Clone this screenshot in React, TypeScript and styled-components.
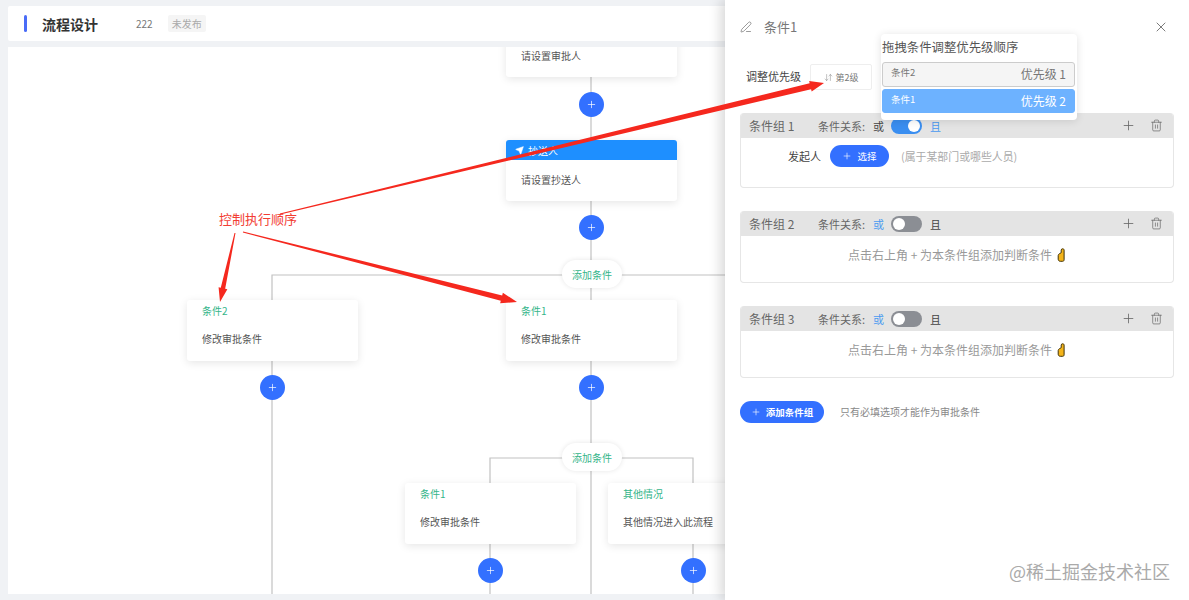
import { FC } from 'react';
import styled, { createGlobalStyle } from 'styled-components';
import { ArrowDownUp, PenLine, Plus, Send, Trash2, X } from 'lucide-react';

const GlobalStyle = createGlobalStyle`
    html, body {
        margin: 0;
        padding: 0;
        background: #f0f2f5;
        font-family: "Noto Sans CJK SC", "Liberation Sans", sans-serif;
    }
`;

const Page = styled.div`
    position: relative;
    width: 1189px;
    height: 600px;
    overflow: hidden;
    display: flex;
    flex-direction: column;
    gap: 6px;
    padding: 6px 0 6px 8px;
    box-sizing: border-box;
`;

const TopBar = styled.header`
    height: 35px;
    flex: none;
    background: #fff;
    border-radius: 2px;
    display: flex;
    align-items: center;
    padding-left: 16px;
`;

const AccentBar = styled.i`
    width: 3px;
    height: 17px;
    border-radius: 2px;
    background: #4a6cf7;
    margin-right: 15px;
`;

const PageTitle = styled.h1`
    margin: 0 38px 0 0;
    font-size: 14px;
    font-weight: 700;
    color: #333;
`;

const FlowId = styled.span`
    font-size: 10px;
    color: #777;
    margin-right: 15px;
`;

const StatusTag = styled.span`
    height: 17px;
    line-height: 17px;
    padding: 0 4px;
    font-size: 10px;
    color: #aaa;
    background: #f5f5f5;
    border-radius: 2px;
`;

const Canvas = styled.main`
    position: relative;
    flex: 1;
    background: #fff;
    overflow: hidden;
`;

const Wires = styled.svg`
    position: absolute;
    inset: 0;
`;

const Card = styled.div<{ $x: number; $y: number }>`
    position: absolute;
    left: ${p => p.$x}px;
    top: ${p => p.$y}px;
    width: 171px;
    height: 61px;
    display: flex;
    flex-direction: column;
    background: #fff;
    border-radius: 3px;
    box-shadow: 0 2px 8px rgba(0, 0, 0, 0.1);
`;

const CardBanner = styled.div`
    height: 20px;
    flex: none;
    display: flex;
    align-items: center;
    gap: 4px;
    padding-left: 9px;
    background: #1e8fff;
    color: #fff;
    font-size: 10px;
    border-radius: 3px 3px 0 0;
`;

const CardTitle = styled.div`
    height: 22px;
    flex: none;
    line-height: 22px;
    padding-left: 15px;
    font-size: 10px;
    color: #35b58a;
`;

const CardBody = styled.div<{ $lift?: boolean }>`
    flex: 1;
    display: flex;
    align-items: center;
    padding: 0 0 ${p => (p.$lift ? 6 : 2)}px 15px;
    font-size: 10px;
    color: #555;
`;

const AddNode = styled.button<{ $x: number; $y: number }>`
    position: absolute;
    left: ${p => p.$x - 12.5}px;
    top: ${p => p.$y - 12.5}px;
    width: 25px;
    height: 25px;
    padding: 0;
    border: none;
    border-radius: 50%;
    background: #3370ff;
    color: #fff;
    display: flex;
    align-items: center;
    justify-content: center;
`;

const AddBranch = styled.button<{ $y: number }>`
    position: absolute;
    left: 554px;
    top: ${p => p.$y}px;
    width: 60px;
    height: 28px;
    padding: 0;
    border: none;
    border-radius: 14px;
    background: #fff;
    color: #35b58a;
    font: inherit;
    font-size: 10px;
    box-shadow: 0 0 5px rgba(0, 0, 0, 0.1);
`;

const Drawer = styled.aside`
    position: absolute;
    top: 0;
    right: 0;
    bottom: 0;
    width: 464px;
    box-sizing: border-box;
    padding: 0 15px;
    display: flex;
    flex-direction: column;
    background: #fff;
    box-shadow: -4px 0 12px rgba(0, 0, 0, 0.16);
`;

const DrawerHead = styled.div`
    height: 54px;
    flex: none;
    display: flex;
    align-items: center;
    color: #666;
`;

const DrawerTitle = styled.span`
    flex: 1;
    margin: -2px 0 0 12px;
    font-size: 13px;
    color: #777;
`;

const CloseButton = styled.span`
    display: flex;
    margin-right: 5px;
    color: #666;
`;

const PriorityRow = styled.div`
    height: 26px;
    flex: none;
    margin: 10px 0 23px;
    padding-left: 6px;
    display: flex;
    align-items: center;
`;

const PriorityLabel = styled.span`
    width: 64px;
    margin-top: -2px;
    font-size: 11px;
    color: #444;
`;

const PriorityButton = styled.div`
    width: 62px;
    height: 26px;
    box-sizing: border-box;
    border: 1px solid #eee;
    border-radius: 2px;
    display: flex;
    align-items: center;
    justify-content: center;
    gap: 3px;
    font-size: 9px;
    color: #777;
`;

const Popover = styled.div`
    position: absolute;
    z-index: 2;
    top: 34px;
    left: 156px;
    width: 196px;
    height: 86px;
    box-sizing: border-box;
    padding: 0 2px 0 1px;
    display: flex;
    flex-direction: column;
    background: #fff;
    border-radius: 4px;
    box-shadow: 0 1px 8px rgba(0, 0, 0, 0.12);
`;

const PopoverTitle = styled.div`
    height: 28px;
    flex: none;
    line-height: 26px;
    font-size: 12.4px;
    color: #555;
`;

const PriorityItem = styled.div<{ $active?: boolean }>`
    height: ${p => (p.$active ? 24 : 25)}px;
    flex: none;
    margin-bottom: 2px;
    box-sizing: border-box;
    padding: 0 8px 2px;
    display: flex;
    align-items: center;
    justify-content: space-between;
    border-radius: 3px;
    border: 1px solid ${p => (p.$active ? '#6db2ff' : '#ccc')};
    background: ${p => (p.$active ? '#6db2ff' : '#f5f5f5')};
    color: ${p => (p.$active ? '#fff' : '#777')};
    font-size: 12px;
`;

const ItemName = styled.span`
    font-size: 9.5px;
    margin-top: -3px;
`;

const Groups = styled.div`
    display: flex;
    flex-direction: column;
    gap: 23px;
`;

const Group = styled.section<{ $height: number }>`
    height: ${p => p.$height}px;
    box-sizing: border-box;
    display: flex;
    flex-direction: column;
    border: 1px solid #e6e6e6;
    border-top: none;
    border-radius: 4px;
    overflow: hidden;
`;

const GroupHead = styled.div`
    height: 25px;
    flex: none;
    display: flex;
    align-items: center;
    padding: 0 10px 0 8px;
    background: #e4e4e4;
    color: #666;
`;

const GroupName = styled.span`
    width: 69px;
    font-size: 12px;
`;

const RelationLabel = styled.span`
    width: 55px;
    font-size: 11px;
`;

const RelationWord = styled.span<{ $active: boolean }>`
    font-size: 11px;
    color: ${p => (p.$active ? '#4a9af0' : '#444')};
`;

const Toggle = styled.span<{ $on: boolean }>`
    width: 31px;
    height: 16px;
    margin: 0 8px 0 7px;
    box-sizing: border-box;
    padding: 2px;
    display: flex;
    justify-content: ${p => (p.$on ? 'flex-end' : 'flex-start')};
    border-radius: 8px;
    background: ${p => (p.$on ? '#3a8ef0' : '#8b8e94')};
`;

const Knob = styled.i`
    width: 12px;
    height: 12px;
    border-radius: 50%;
    background: #fff;
`;

const GroupTools = styled.div`
    margin-left: auto;
    display: flex;
    align-items: center;
    gap: 14px;
    color: #666;
`;

const RuleRow = styled.div`
    display: flex;
    align-items: center;
    padding: 7px 0 0 47px;
`;

const RuleName = styled.span`
    width: 42px;
    font-size: 11px;
    color: #444;
`;

const PrimaryButton = styled.button<{ $width: number; $bold?: boolean }>`
    width: ${p => p.$width}px;
    height: 22px;
    flex: none;
    padding: 0 0 1px;
    border: none;
    border-radius: 11px;
    background: #3370ff;
    color: #fff;
    font: inherit;
    font-size: 9.5px;
    font-weight: ${p => (p.$bold ? 700 : 400)};
    display: flex;
    align-items: center;
    justify-content: center;
    gap: 5px;
`;

const RuleHint = styled.span`
    margin: -1px 0 0 12px;
    font-size: 10.9px;
    color: #aaa;
`;

const EmptyTip = styled.div`
    display: flex;
    align-items: center;
    justify-content: center;
    gap: 5px;
    padding: 10px 0 0 0;
    font-size: 12px;
    line-height: 18px;
    color: #999;
`;

const FooterRow = styled.div`
    margin-top: 23px;
    display: flex;
    align-items: center;
    gap: 16px;
`;

const FooterHint = styled.span`
    margin-top: -2px;
    font-size: 10px;
    color: #888;
`;

const Annotations = styled.svg`
    position: absolute;
    z-index: 3;
    inset: 0;
    pointer-events: none;
`;

const Callout = styled.span`
    position: absolute;
    z-index: 3;
    left: 219px;
    top: 210px;
    font-size: 13px;
    line-height: 18px;
    color: #f23d33;
`;

const Watermark = styled.span`
    position: absolute;
    z-index: 3;
    right: 19px;
    bottom: 16px;
    font-size: 18px;
    line-height: 26px;
    color: #aaa;
`;

// tapered annotation arrow, thin at the tail and fat by the head
const arrowPoints = (
    [x1, y1]: number[],
    [x2, y2]: number[],
    tail: number,
    neck: number,
    headLen: number,
    headWidth: number
) => {
    const len = Math.hypot(x2 - x1, y2 - y1);
    const ux = (x2 - x1) / len;
    const uy = (y2 - y1) / len;
    const nx = -uy;
    const ny = ux;
    const bx = x2 - ux * headLen;
    const by = y2 - uy * headLen;
    const pts = [
        [x1 + (nx * tail) / 2, y1 + (ny * tail) / 2],
        [bx + (nx * neck) / 2, by + (ny * neck) / 2],
        [bx + (nx * headWidth) / 2, by + (ny * headWidth) / 2],
        [x2, y2],
        [bx - (nx * headWidth) / 2, by - (ny * headWidth) / 2],
        [bx - (nx * neck) / 2, by - (ny * neck) / 2],
        [x1 - (nx * tail) / 2, y1 - (ny * tail) / 2]
    ];
    return pts.map(p => p.join(',')).join(' ');
};

const HandIcon: FC = () => (
    <svg width="9" height="14" viewBox="0 0 9 14">
        <path
            d="M5.6.8c.9 0 1.500.5 1.500 1.300v9.700c0 .9-.6 1.500-1.500 1.500H3.300c-1.200 0-2.100-.9-2.100-2.100V7.600c0-.8.4-1.400 1-1.700L4.200 4.700V2.100C4.200 1.300 4.800.8 5.600.8z"
            fill="#f4b41a"
            stroke="#3f3208"
            strokeWidth="1"
        />
    </svg>
);

const WireLines: FC = () => (
    <Wires width="1181" height="547">
        <g stroke="#c2c2c2" strokeWidth="1.2" fill="none">
            <path d="M583 30V93M583 154V547" />
            <path d="M264 547V228H720" />
            <path d="M482 547V411H685V547" />
        </g>
    </Wires>
);

const groups = [
    { name: '条件组 2', on: false },
    { name: '条件组 3', on: false }
];

const GroupHeader: FC<{ name: string; on: boolean }> = ({ name, on }) => (
    <GroupHead>
        <GroupName>{name}</GroupName>
        <RelationLabel>条件关系:</RelationLabel>
        <RelationWord $active={!on}>或</RelationWord>
        <Toggle $on={on}>
            <Knob />
        </Toggle>
        <RelationWord $active={on}>且</RelationWord>
        <GroupTools>
            <Plus size={15} strokeWidth={1.3} />
            <Trash2 size={13} strokeWidth={1.3} />
        </GroupTools>
    </GroupHead>
);

export default function App() {
    return (
        <Page>
            <GlobalStyle />
            <TopBar>
                <AccentBar />
                <PageTitle>流程设计</PageTitle>
                <FlowId>222</FlowId>
                <StatusTag>未发布</StatusTag>
            </TopBar>

            <Canvas>
                <WireLines />

                <Card $x={498} $y={-31}>
                    <CardBanner />
                    <CardBody>请设置审批人</CardBody>
                </Card>
                <AddNode $x={583} $y={57}>
                    <Plus size={11} strokeWidth={1.5} />
                </AddNode>

                <Card $x={498} $y={93}>
                    <CardBanner>
                        <Send size={9} fill="#fff" strokeWidth={1.5} />
                        抄送人
                    </CardBanner>
                    <CardBody>请设置抄送人</CardBody>
                </Card>
                <AddNode $x={583} $y={180}>
                    <Plus size={11} strokeWidth={1.5} />
                </AddNode>

                <AddBranch $y={213}>添加条件</AddBranch>
                <Card $x={179} $y={253}>
                    <CardTitle>条件2</CardTitle>
                    <CardBody $lift>修改审批条件</CardBody>
                </Card>
                <Card $x={498} $y={253}>
                    <CardTitle>条件1</CardTitle>
                    <CardBody $lift>修改审批条件</CardBody>
                </Card>
                <AddNode $x={264} $y={340}>
                    <Plus size={11} strokeWidth={1.5} />
                </AddNode>
                <AddNode $x={583} $y={340}>
                    <Plus size={11} strokeWidth={1.5} />
                </AddNode>

                <AddBranch $y={396}>添加条件</AddBranch>
                <Card $x={397} $y={436}>
                    <CardTitle>条件1</CardTitle>
                    <CardBody $lift>修改审批条件</CardBody>
                </Card>
                <Card $x={600} $y={436}>
                    <CardTitle>其他情况</CardTitle>
                    <CardBody $lift>其他情况进入此流程</CardBody>
                </Card>
                <AddNode $x={482} $y={523}>
                    <Plus size={11} strokeWidth={1.5} />
                </AddNode>
                <AddNode $x={685} $y={523}>
                    <Plus size={11} strokeWidth={1.5} />
                </AddNode>
            </Canvas>

            <Drawer>
                <DrawerHead>
                    <PenLine size={12} strokeWidth={1.3} />
                    <DrawerTitle>条件1</DrawerTitle>
                    <CloseButton>
                        <X size={16} strokeWidth={1.3} />
                    </CloseButton>
                </DrawerHead>

                <PriorityRow>
                    <PriorityLabel>调整优先级</PriorityLabel>
                    <PriorityButton>
                        <ArrowDownUp size={9} strokeWidth={1.2} />
                        第2级
                    </PriorityButton>
                </PriorityRow>

                <Popover>
                    <PopoverTitle>拖拽条件调整优先级顺序</PopoverTitle>
                    <PriorityItem>
                        <ItemName>条件2</ItemName>
                        优先级 1
                    </PriorityItem>
                    <PriorityItem $active>
                        <ItemName>条件1</ItemName>
                        优先级 2
                    </PriorityItem>
                </Popover>

                <Groups>
                    <Group $height={75}>
                        <GroupHeader name="条件组 1" on />
                        <RuleRow>
                            <RuleName>发起人</RuleName>
                            <PrimaryButton $width={59}>
                                <Plus size={10} strokeWidth={1.5} />
                                选择
                            </PrimaryButton>
                            <RuleHint>(属于某部门或哪些人员)</RuleHint>
                        </RuleRow>
                    </Group>
                    {groups.map(g => (
                        <Group $height={72} key={g.name}>
                            <GroupHeader name={g.name} on={g.on} />
                            <EmptyTip>
                                点击右上角 + 为本条件组添加判断条件
                                <HandIcon />
                            </EmptyTip>
                        </Group>
                    ))}
                </Groups>

                <FooterRow>
                    <PrimaryButton $width={84} $bold>
                        <Plus size={10} strokeWidth={1.5} />
                        添加条件组
                    </PrimaryButton>
                    <FooterHint>只有必填选项才能作为审批条件</FooterHint>
                </FooterRow>
            </Drawer>

            <Annotations width="1189" height="600">
                <g fill="#f5281e">
                    <polygon points={arrowPoints([280, 214], [824, 83], 1, 6, 14, 11)} />
                    <polygon points={arrowPoints([235, 233], [220, 302], 1, 4.5, 14, 9)} />
                    <polygon points={arrowPoints([243, 232], [517, 302], 1, 5.5, 16, 11)} />
                </g>
            </Annotations>
            <Callout>控制执行顺序</Callout>
            <Watermark>@稀土掘金技术社区</Watermark>
        </Page>
    );
}
